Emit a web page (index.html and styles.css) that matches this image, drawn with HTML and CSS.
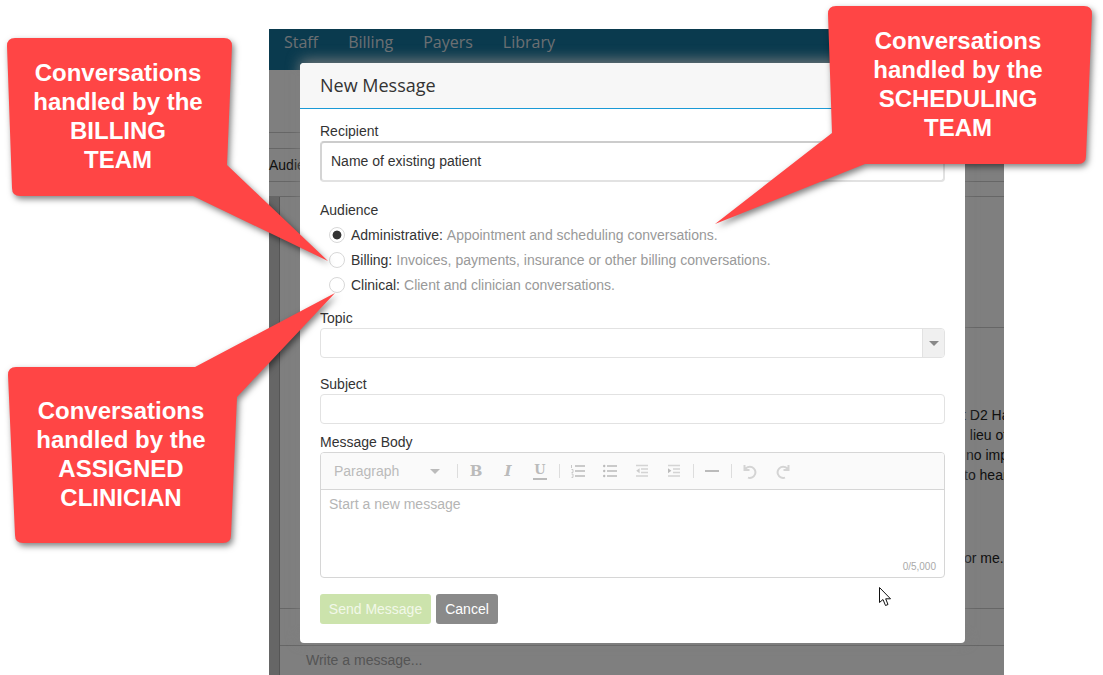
FILE: index.html
```html
<!DOCTYPE html>
<html lang="en">
<head>
    <meta charset="UTF-8">
    <title>New Message</title>
    <link rel="stylesheet" href="styles.css">
</head>
<body>
    <!-- page behind the dialog -->
    <div class="app">
        <nav class="nav">
            <a>Staff</a>
            <a>Billing</a>
            <a>Payers</a>
            <a>Library</a>
        </nav>
        <div class="band band-top"></div>
        <div class="band band-thin"></div>
        <div class="band band-tabs">Audience</div>
        <div class="band band-small"></div>
        <div class="thread-wrap">
            <div class="sidebar"></div>
            <div class="thread">
                <div class="thread-head"></div>
                <div class="thread-body">
                    <p class="line-a">t D2 Hall</p>
                    <p class="line-a">&nbsp;&nbsp;lieu of</p>
                    <p class="line-b">no impact</p>
                    <p class="line-c">to hear</p>
                    <p class="line-c line-last">or me.</p>
                </div>
                <div class="thread-actions"></div>
                <div class="composer">Write a message...</div>
            </div>
        </div>
    </div>
    <div class="backdrop"></div>

    <div class="modal">
        <div class="modal-header">New Message</div>
        <div class="modal-body">
            <label class="field-label">Recipient</label>
            <div class="recipient">Name of existing patient</div>

            <label class="field-label audience-label">Audience</label>
            <div class="radio-row">
                <input type="radio" name="audience" checked>
                <span class="radio-name">Administrative:</span>
                <span class="radio-desc">Appointment and scheduling conversations.</span>
            </div>
            <div class="radio-row">
                <input type="radio" name="audience">
                <span class="radio-name">Billing:</span>
                <span class="radio-desc">Invoices, payments, insurance or other billing conversations.</span>
            </div>
            <div class="radio-row">
                <input type="radio" name="audience">
                <span class="radio-name">Clinical:</span>
                <span class="radio-desc">Client and clinician conversations.</span>
            </div>

            <label class="field-label topic-label">Topic</label>
            <div class="select-box">
                <div class="select-arrow"><span class="caret caret-dark"></span></div>
            </div>

            <label class="field-label subject-label">Subject</label>
            <div class="text-box"></div>

            <label class="field-label body-label">Message Body</label>
            <div class="editor">
                <div class="toolbar">
                    <div class="format-select">Paragraph<span class="caret"></span></div>
                    <span class="sep"></span>
                    <span class="tool tool-b">B</span>
                    <span class="tool tool-i">I</span>
                    <span class="tool"><span class="tool-u">U</span></span>
                    <span class="sep"></span>
                    <span class="tool">
                        <svg width="14" height="14" viewBox="0 0 14 14"><path d="M4 2h10M4 7h10M4 12h10" stroke="#bbb" stroke-width="1.7"/><path d="M.5 1v3M.5 5.5h1.5v3H.5M.5 10h1.5v3.4H.5" stroke="#c8c8c8" stroke-width="1" fill="none"/></svg>
                    </span>
                    <span class="tool">
                        <svg width="14" height="14" viewBox="0 0 14 14"><path d="M4 2h10M4 7h10M4 12h10" stroke="#bbb" stroke-width="1.7"/><circle cx="1.2" cy="2" r="1.2" fill="#bbb"/><circle cx="1.2" cy="7" r="1.2" fill="#bbb"/><circle cx="1.2" cy="12" r="1.2" fill="#bbb"/></svg>
                    </span>
                    <span class="tool">
                        <svg width="12" height="14" viewBox="0 0 12 14"><path d="M0 1.5h12M5 5h7M5 8.5h7M0 12h12" stroke="#d4d4d4" stroke-width="1.5"/><path d="M3.6 4.3v5L.2 6.8z" fill="#ccc"/></svg>
                    </span>
                    <span class="tool">
                        <svg width="12" height="14" viewBox="0 0 12 14"><path d="M0 1.5h12M5 5h7M5 8.5h7M0 12h12" stroke="#d4d4d4" stroke-width="1.5"/><path d="M0 4.3v5l3.4-2.5z" fill="#bbb"/></svg>
                    </span>
                    <span class="sep"></span>
                    <span class="tool">
                        <svg width="14" height="14" viewBox="0 0 14 14"><path d="M0 7h14" stroke="#bbb" stroke-width="2"/></svg>
                    </span>
                    <span class="sep"></span>
                    <span class="tool">
                        <svg width="15" height="15" viewBox="0 0 15 15"><path d="M1.5 1v5h5M1.7 6A5.6 5.6 0 1 1 5 13.6" stroke="#d4d4d4" stroke-width="2" fill="none"/></svg>
                    </span>
                    <span class="tool">
                        <svg width="15" height="15" viewBox="0 0 15 15"><path d="M13.5 1v5h-5M13.3 6A5.6 5.6 0 1 0 10 13.6" stroke="#d4d4d4" stroke-width="2" fill="none"/></svg>
                    </span>
                </div>
                <div class="editor-area">
                    <div class="placeholder">Start a new message</div>
                    <div class="counter">0/5,000</div>
                </div>
            </div>

            <div class="actions">
                <button class="btn btn-send">Send Message</button>
                <button class="btn btn-cancel">Cancel</button>
            </div>
        </div>
    </div>

    <!-- annotation shapes, drawn on top of the screenshot -->
    <svg class="callouts" width="1103" height="675" viewBox="0 0 1103 675">
        <path d="M15 38H224Q232 38 232 46L227 165L328 261L193 196H20Q12 196 12 188L7 46Q7 38 15 38Z"/>
        <path d="M16 367H195L335 293L237 397L231 535Q231 543 223 543H23Q15 543 15 535L8 375Q8 367 16 367Z"/>
        <path d="M836 6H1084Q1092 6 1092 14L1086 156Q1086 164 1078 164H865L715 224L832 133L828 14Q828 6 836 6Z"/>
    </svg>
    <div class="callout-text callout-billing">Conversations<br>handled by the<br>BILLING<br>TEAM</div>
    <div class="callout-text callout-clinician">Conversations<br>handled by the<br>ASSIGNED<br>CLINICIAN</div>
    <div class="callout-text callout-scheduling">Conversations<br>handled by the<br>SCHEDULING<br>TEAM</div>

    <svg class="pointer" width="14" height="20" viewBox="0 0 14 20">
        <path d="M.5.5V15.5L4 12.5L6.5 18.5L9 17.5L6.7 11.8H11.5Z" fill="#fff" stroke="#111" stroke-width="1"/>
    </svg>
</body>
</html>
```

FILE: styles.css
```css
* {
    box-sizing: border-box;
}
body {
    margin: 0;
    height: 675px;
    overflow: hidden;
    position: relative;
    background: #fff;
    font-family: 'Liberation Sans', Arial, sans-serif;
    font-size: 14px;
    color: #333;
}

/* page behind the dialog */
.app {
    margin: 29px 0 0 269px;
    width: 735px;
    height: 646px;
    display: flex;
    flex-direction: column;
    background: #fff;
}
.nav {
    height: 41px;
    flex: none;
    display: flex;
    gap: 30px;
    padding: 2px 0 0 15px;
    align-items: flex-start;
    background: #14749c;
    font-family: 'Open Sans', sans-serif;
    font-size: 16px;
    line-height: 22px;
    color: #d8dfe4;
}
.band {
    flex: none;
    border-bottom: 1px solid #ccc;
}
.band-top {
    height: 63px;
}
.band-thin {
    height: 16px;
}
.band-tabs {
    height: 33px;
    line-height: 33px;
    color: #222;
}
.band-small {
    height: 15px;
}
.thread-wrap {
    flex: 1;
    display: flex;
    min-height: 0;
}
.sidebar {
    width: 11px;
    background: #ccc;
    border-right: 1px solid #aaa;
}
.thread {
    flex: 1;
    display: flex;
    flex-direction: column;
    min-width: 0;
}
.thread-head {
    height: 131px;
    flex: none;
    border-bottom: 1px solid #ccc;
}
.thread-body {
    height: 281px;
    flex: none;
    padding: 77px 0 0 682px;
    border-bottom: 1px solid #ccc;
    overflow: hidden;
    white-space: nowrap;
    color: #222;
}
.thread-body p {
    margin: 0;
    height: 20px;
    line-height: 20px;
}
.line-a {
    text-indent: 0;
}
.line-b {
    text-indent: 4px;
}
.line-c {
    text-indent: 2px;
}
.thread-body .line-last {
    margin-top: 63px;
}
.thread-actions {
    height: 37px;
    flex: none;
    border-bottom: 1px solid #ccc;
}
.composer {
    flex: 1;
    padding: 6px 0 0 26px;
    color: #aaa;
}
.backdrop {
    position: absolute;
    left: 269px;
    top: 29px;
    width: 735px;
    height: 646px;
    background: rgba(0, 0, 0, 0.5);
}

/* dialog */
.modal {
    position: absolute;
    left: 300px;
    top: 63px;
    width: 665px;
    height: 580px;
    background: #fff;
    border-radius: 4px;
    box-shadow: 0 -3px 14px rgba(128, 128, 128, 0.9);
}
.modal-header {
    height: 46px;
    padding: 0 20px;
    line-height: 45px;
    background: #f7f7f7;
    border-bottom: 1px solid #1b9ad6;
    border-radius: 4px 4px 0 0;
    font-family: 'Open Sans', sans-serif;
    font-size: 18px;
    color: #333;
}
.modal-body {
    padding: 14px 20px 0;
}
.field-label {
    display: block;
    height: 17px;
    line-height: 17px;
    color: #333;
}
.recipient {
    height: 41px;
    margin-top: 1px;
    padding-left: 9px;
    line-height: 37px;
    border: 2px solid #e2e2e2;
    border-top-color: #ccc;
    border-left-color: #d4d4d4;
    border-radius: 4px;
    color: #333;
}
.audience-label {
    margin: 20px 0 3px;
}
.radio-row {
    height: 25px;
    display: flex;
    align-items: center;
    padding-left: 9px;
    white-space: pre;
}
.radio-row input {
    appearance: none;
    width: 16px;
    height: 16px;
    margin: 0 6px 0 0;
    border: 1px solid #d8d8d8;
    border-radius: 50%;
    background: #fff;
}
.radio-row input:checked {
    background: radial-gradient(circle, #333 0, #333 4px, #fff 4.8px);
}
.radio-name {
    color: #333;
    margin-right: 4px;
}
.radio-desc {
    color: #999;
}
.topic-label {
    margin-top: 13px;
}
.select-box {
    height: 30px;
    margin-top: 1px;
    display: flex;
    justify-content: flex-end;
    border: 1px solid #e2e2e2;
    border-radius: 4px;
}
.select-arrow {
    width: 22px;
    display: flex;
    align-items: center;
    justify-content: center;
    background: #f0f0f0;
    border-left: 1px solid #e2e2e2;
    border-radius: 0 3px 3px 0;
}
.caret {
    width: 0;
    height: 0;
    border-left: 5px solid transparent;
    border-right: 5px solid transparent;
    border-top: 5px solid #bbb;
}
.caret-dark {
    border-top-color: #888;
}
.subject-label {
    margin-top: 18px;
}
.text-box {
    height: 30px;
    margin-top: 1px;
    border: 1px solid #e2e2e2;
    border-radius: 4px;
}
.body-label {
    margin-top: 10px;
}
.editor {
    height: 126px;
    margin-top: 1px;
    display: flex;
    flex-direction: column;
    border: 1px solid #d6d6d6;
    border-radius: 4px;
}
.toolbar {
    height: 37px;
    flex: none;
    display: flex;
    align-items: center;
    background: #fafafa;
    border-bottom: 1px solid #d6d6d6;
    border-radius: 3px 3px 0 0;
}
.format-select {
    width: 133px;
    padding: 0 14px 0 13px;
    display: flex;
    justify-content: space-between;
    align-items: center;
    color: #bbb;
}
.sep {
    width: 1px;
    height: 14px;
    margin: 0 2px 0 3px;
    background: #ddd;
}
.tool {
    width: 32px;
    height: 20px;
    display: flex;
    align-items: center;
    justify-content: center;
    line-height: 20px;
    font-size: 16px;
    color: #bbb;
}
.tool-b {
    font-family: 'DejaVu Serif', serif;
    font-weight: bold;
    font-size: 15px;
}
.tool-i {
    font-family: 'DejaVu Serif', serif;
    font-weight: bold;
    font-style: italic;
    font-size: 15px;
}
.tool-u {
    padding: 0 1px;
    height: 18px;
    line-height: 15px;
    font-family: 'DejaVu Serif', serif;
    font-weight: bold;
    font-size: 13px;
    border-bottom: 2px solid #bbb;
}
.editor-area {
    flex: 1;
    display: flex;
    flex-direction: column;
    justify-content: space-between;
    padding: 6px 8px 5px;
}
.placeholder {
    color: #b5b5b5;
}
.counter {
    text-align: right;
    font-size: 10px;
    color: #aaa;
}
.actions {
    display: flex;
    gap: 5px;
    margin-top: 16px;
}
.btn {
    height: 30px;
    border: none;
    border-radius: 3px;
    font-family: 'Liberation Sans', Arial, sans-serif;
    font-size: 14px;
    padding: 0;
}
.btn-send {
    width: 111px;
    background: #cce3ac;
    color: #f2f8e9;
}
.btn-cancel {
    width: 62px;
    background: #8a8a8a;
    color: #fff;
}

/* annotations */
.callouts {
    position: absolute;
    left: 0;
    top: 0;
    fill: #ff4545;
    filter: drop-shadow(2px 3px 3px rgba(0, 0, 0, 0.5));
}
.callout-text {
    position: absolute;
    width: 220px;
    text-align: center;
    font-size: 24px;
    font-weight: bold;
    line-height: 29px;
    color: #fff;
}
.callout-billing {
    left: 8px;
    top: 58px;
}
.callout-clinician {
    left: 11px;
    top: 396px;
}
.callout-scheduling {
    left: 848px;
    top: 26px;
}
.pointer {
    position: absolute;
    left: 879px;
    top: 587px;
}
```
